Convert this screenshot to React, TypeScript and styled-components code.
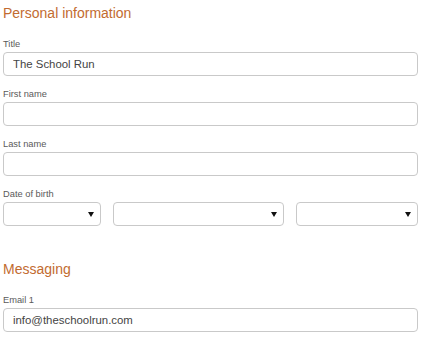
import React from 'react';
import styled, { createGlobalStyle } from 'styled-components';

const GlobalStyle = createGlobalStyle`
  html, body {
    margin: 0;
    padding: 0;
    background: #fff;
  }
  body {
    font-family: 'Liberation Sans', Arial, sans-serif;
  }
`;

const Page = styled.div`
  width: 415px;
  padding: 4px 0 0 3px;
`;

const Section = styled.section`
  margin-bottom: 34px;

  &:last-child {
    margin-bottom: 0;
  }
`;

const Heading = styled.h2`
  margin: 0 0 16px;
  font-size: 14px;
  line-height: 18px;
  font-weight: normal;
  color: #c26b30;
`;

const Field = styled.div`
  margin-bottom: 12px;

  &:last-child {
    margin-bottom: 0;
  }
`;

const Label = styled.label`
  display: block;
  font-size: 9.3px;
  line-height: 12px;
  color: #5a5a5a;
  margin-bottom: 2px;
`;

const TextInput = styled.input`
  display: block;
  box-sizing: border-box;
  width: 100%;
  height: 24px;
  margin: 0;
  padding: 0 9px;
  border: 1px solid #c9c9c9;
  border-radius: 4px;
  background: #fff;
  font-family: 'Liberation Sans', Arial, sans-serif;
  font-size: 11.4px;
  color: #444;
  outline: none;
`;

const DateRow = styled.div`
  display: grid;
  grid-template-columns: 98px 171px 122px;
  column-gap: 12px;
`;

const SelectWrap = styled.div`
  position: relative;

  &::after {
    content: '';
    position: absolute;
    right: 7px;
    top: 10px;
    border-left: 3px solid transparent;
    border-right: 3px solid transparent;
    border-top: 5px solid #111;
    pointer-events: none;
  }
`;

const Select = styled.select`
  display: block;
  box-sizing: border-box;
  width: 100%;
  height: 24px;
  margin: 0;
  border: 1px solid #c9c9c9;
  border-radius: 4px;
  background: #fff;
  appearance: none;
  outline: none;
`;

const App = () => (
  <>
    <GlobalStyle />
    <Page>
      <Section>
        <Heading>Personal information</Heading>
        <Field>
          <Label>Title</Label>
          <TextInput defaultValue="The School Run" />
        </Field>
        <Field>
          <Label>First name</Label>
          <TextInput />
        </Field>
        <Field>
          <Label>Last name</Label>
          <TextInput />
        </Field>
        <Field>
          <Label>Date of birth</Label>
          <DateRow>
            {[0, 1, 2].map((i) => (
              <SelectWrap key={i}>
                <Select />
              </SelectWrap>
            ))}
          </DateRow>
        </Field>
      </Section>
      <Section>
        <Heading>Messaging</Heading>
        <Field>
          <Label>Email 1</Label>
          <TextInput defaultValue="info@theschoolrun.com" />
        </Field>
      </Section>
    </Page>
  </>
);

export default App;
